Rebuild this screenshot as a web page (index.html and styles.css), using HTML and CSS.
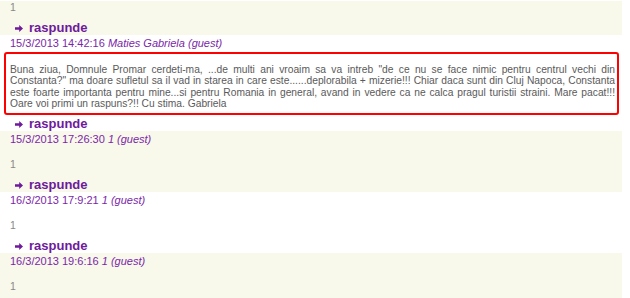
FILE: index.html
```html
<!DOCTYPE html>
<html lang="ro">

<head>
    <meta charset="UTF-8" />
    <meta name="viewport" content="width=device-width, initial-scale=1.0" />
    <title>Comentarii</title>
    <link rel="stylesheet" href="styles.css">
</head>

<body>
    <div class="comments">
        <!-- comentariu (taiat sus) -->
        <div class="comment odd cut">
            <div class="comment-body">1</div>
            <a href="#" class="reply">
                <svg class="reply-icon" width="8" height="7" viewBox="0 0 8 7"><path d="M0 2.3h4.2V0L8 3.5 4.2 7V4.7H0z" /></svg>
                raspunde
            </a>
        </div>

        <div class="comment">
            <div class="comment-meta">15/3/2013 14:42:16 <em>Maties Gabriela (guest)</em></div>
            <div class="comment-box">Buna ziua, Domnule Promar cerdeti-ma, ...de multi ani vroaim sa va intreb "de ce nu se face nimic pentru centrul vechi din Constanta?" ma doare sufletul sa il vad in starea in care este......deplorabila + mizerie!!! Chiar daca sunt din Cluj Napoca, Constanta este foarte importanta pentru mine...si pentru Romania in general, avand in vedere ca ne calca pragul turistii straini. Mare pacat!!! Oare voi primi un raspuns?!! Cu stima. Gabriela</div>
            <a href="#" class="reply">
                <svg class="reply-icon" width="8" height="7" viewBox="0 0 8 7"><path d="M0 2.3h4.2V0L8 3.5 4.2 7V4.7H0z" /></svg>
                raspunde
            </a>
        </div>

        <div class="comment odd">
            <div class="comment-meta">15/3/2013 17:26:30 <em>1 (guest)</em></div>
            <div class="comment-body">1</div>
            <a href="#" class="reply">
                <svg class="reply-icon" width="8" height="7" viewBox="0 0 8 7"><path d="M0 2.3h4.2V0L8 3.5 4.2 7V4.7H0z" /></svg>
                raspunde
            </a>
        </div>

        <div class="comment">
            <div class="comment-meta">16/3/2013 17:9:21 <em>1 (guest)</em></div>
            <div class="comment-body">1</div>
            <a href="#" class="reply">
                <svg class="reply-icon" width="8" height="7" viewBox="0 0 8 7"><path d="M0 2.3h4.2V0L8 3.5 4.2 7V4.7H0z" /></svg>
                raspunde
            </a>
        </div>

        <div class="comment odd">
            <div class="comment-meta">16/3/2013 19:6:16 <em>1 (guest)</em></div>
            <div class="comment-body">1</div>
        </div>
    </div>
</body>

</html>
```

FILE: styles.css
```css
body {
    font-family: "Liberation Sans", Arial, sans-serif;
    background-color: #ffffff;
    margin: 0;
    padding: 0;
}

.comments {
    width: 622px;
}

.comment {
    padding: 2px 0 1px;
}

.comment.odd {
    background-color: #f8f8eb;
}

.comment.cut {
    padding-top: 0;
}

.comment.cut .comment-body {
    margin-top: 1px;
}

.comment-meta {
    font-size: 11px;
    line-height: 13px;
    color: #7b27a8;
    padding-left: 10px;
}

.comment-body {
    font-size: 10.5px;
    line-height: 12px;
    color: #888;
    margin: 12px 0 9px;
    padding-left: 10px;
}

/* comentariul selectat */
.comment-box {
    margin: 2px 3px 3px 4px;
    padding: 10px 2px 4px 4px;
    border: 2px solid #f00;
    border-radius: 3px;
    font-size: 10.25px;
    line-height: 11.3px;
    color: #5a5a5a;
    text-align: justify;
}

.reply {
    display: flex;
    align-items: center;
    gap: 6px;
    padding-left: 15px;
    font-size: 13px;
    line-height: 12px;
    font-weight: bold;
    color: #6e1a9b;
    text-decoration: none;
}

.reply-icon {
    fill: #6e1a9b;
}
```
